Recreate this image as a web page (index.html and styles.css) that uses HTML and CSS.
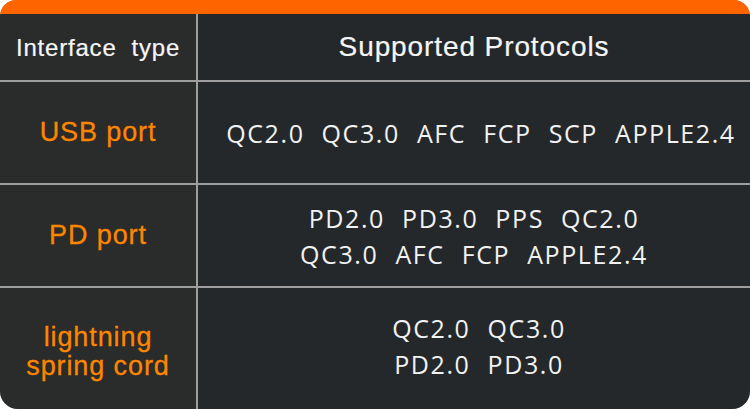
FILE: index.html
```html
<!DOCTYPE html>
<html>
<head>
<meta charset="utf-8">
<link rel="stylesheet" href="styles.css">
</head>
<body>
<div class="card">
  <div class="topbar"></div>
  <div class="table">
    <div class="cell head left">Interface&nbsp; type</div>
    <div class="cell head right">Supported Protocols</div>

    <div class="cell label left">USB port</div>
    <div class="cell proto right single"><span>QC2.0</span><span>QC3.0</span><span>AFC</span><span>FCP</span><span>SCP</span><span>APPLE2.4</span></div>

    <div class="cell label left">PD port</div>
    <div class="cell proto right">
      <div class="pline"><span>PD2.0</span><span>PD3.0</span><span>PPS</span><span>QC2.0</span></div>
      <div class="pline"><span>QC3.0</span><span>AFC</span><span>FCP</span><span>APPLE2.4</span></div>
    </div>

    <div class="cell label left last">lightning<br>spring cord</div>
    <div class="cell proto right last">
      <div class="pline"><span>QC2.0</span><span>QC3.0</span></div>
      <div class="pline"><span>PD2.0</span><span>PD3.0</span></div>
    </div>
  </div>
</div>
</body>
</html>
```
FILE: styles.css
```css
html, body {
  margin: 0;
  padding: 0;
  background: #ffffff;
}
.card {
  width: 750px;
  height: 409px;
  border-radius: 16px 16px 18px 18px;
  overflow: hidden;
  display: flex;
  flex-direction: column;
  background: #9e9e9e;
}
.topbar {
  height: 14px;
  background: #fe6500;
  flex: none;
}
.table {
  flex: 1;
  display: grid;
  grid-template-columns: 196px 1fr;
  grid-template-rows: 66px 101px 101px 1fr;
  column-gap: 2px;
  row-gap: 2px;
}
.cell {
  display: flex;
  align-items: center;
  justify-content: center;
  text-align: center;
}
.left {
  background: #2a2b2b;
}
.right {
  background: #25282a;
}
.head {
  color: #f6f6f6;
  font-family: "Liberation Sans", Arial, sans-serif;
  letter-spacing: 0.8px;
  -webkit-text-stroke: 0.2px #f6f6f6;
}
.head.left {
  font-size: 24px;
  padding-top: 2px;
}
.head.right {
  font-size: 28px;
  letter-spacing: 0.9px;
}
.label {
  color: #fd8600;
  font-family: "Liberation Sans", Arial, sans-serif;
  font-size: 27px;
  letter-spacing: 0.9px;
  line-height: 29px;
  -webkit-text-stroke: 0.3px #fd8600;
}
.last.left {
  padding-top: 6px;
}
.proto {
  flex-direction: column;
  color: #f2f2f2;
  font-family: "Open Sans", sans-serif;
  font-size: 25px;
  letter-spacing: 1.6px;
  line-height: 36px;
}
.proto.last {
  padding-bottom: 6px;
  padding-left: 10px;
}
.single {
  flex-direction: row;
  gap: 17px;
  padding-left: 14px;
}
.pline {
  display: flex;
  justify-content: center;
  gap: 17px;
}
```
